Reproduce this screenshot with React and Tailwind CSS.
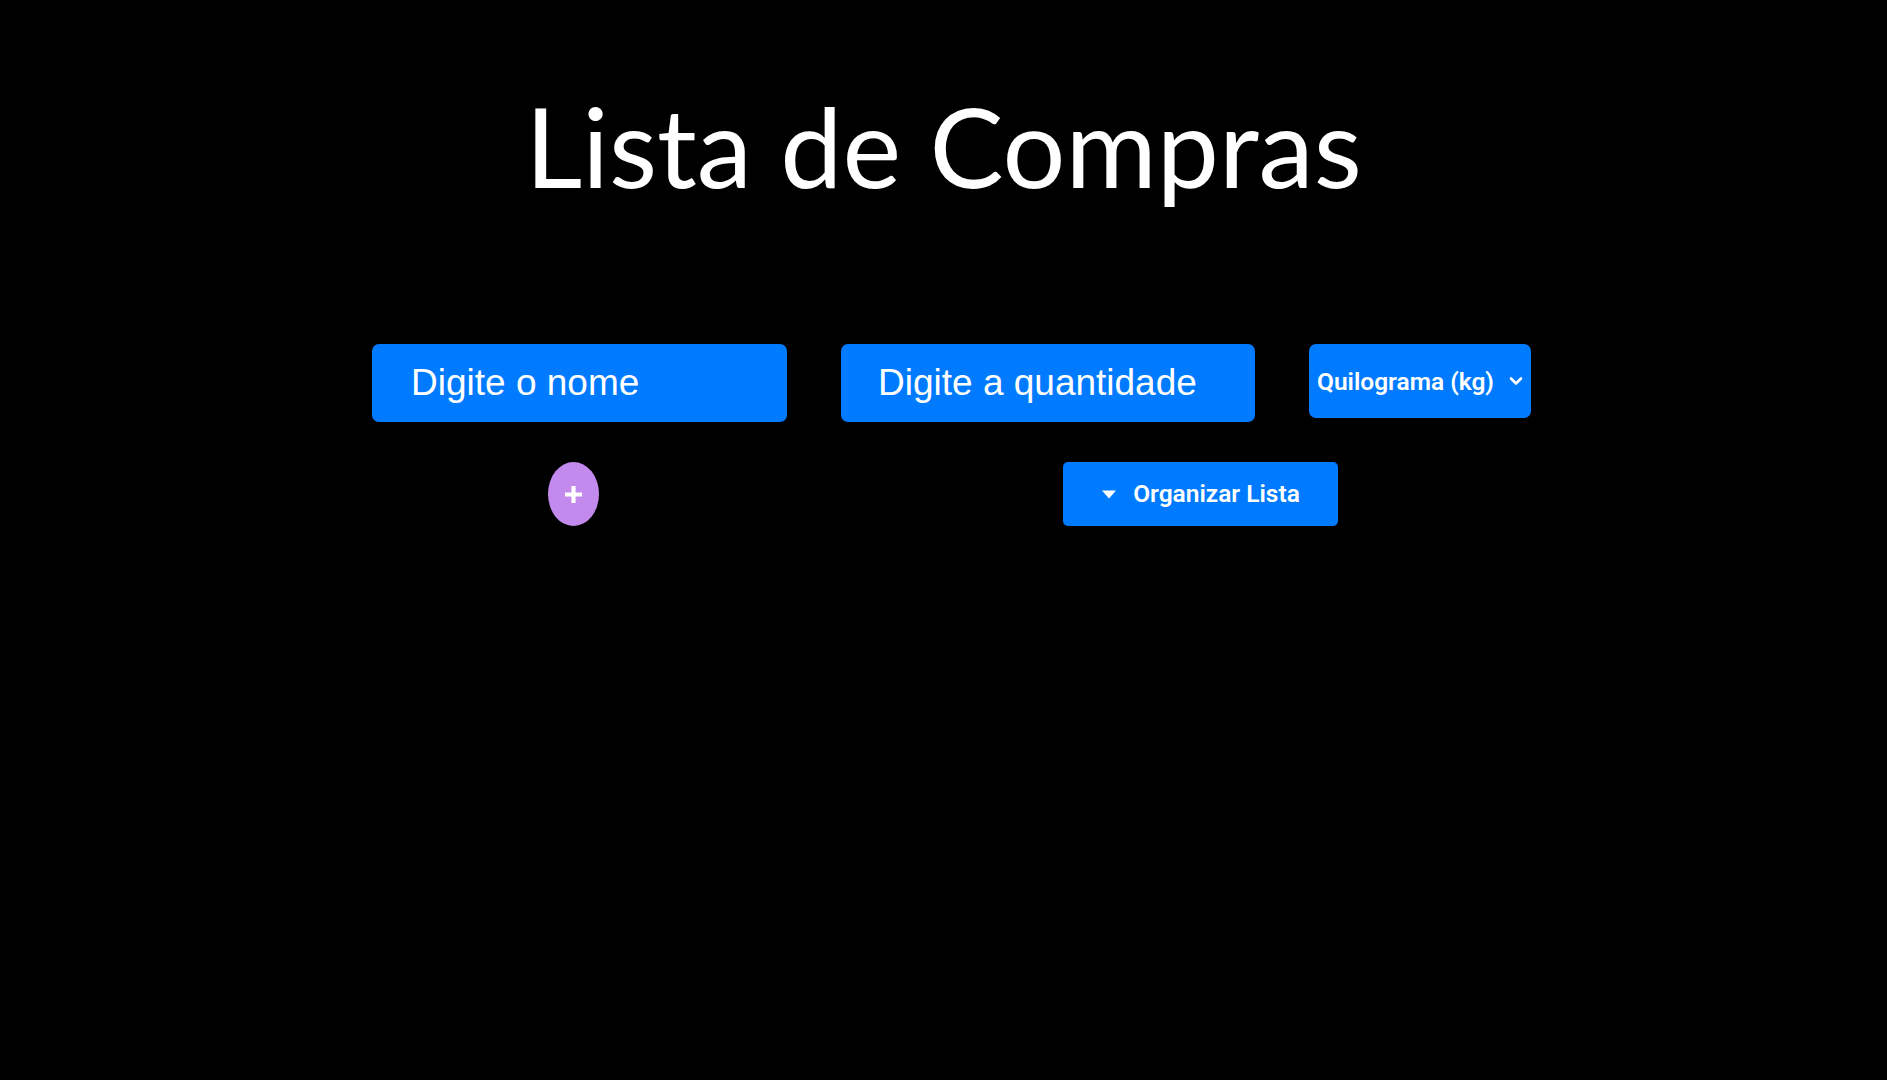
import { useState } from 'react';

function ChevronIcon() {
  return (
    <svg width="14" height="10" viewBox="0 0 14 10" fill="none">
      <path d="M2 2.5 L7 7.5 L12 2.5" stroke="white" strokeWidth="2.6" strokeLinecap="round" strokeLinejoin="round" />
    </svg>
  );
}

function CaretIcon() {
  return (
    <svg width="16" height="9" viewBox="0 0 16 9">
      <path d="M1 0.5 H15 L8 8.5 Z" fill="white" />
    </svg>
  );
}

function PlusIcon() {
  return (
    <svg width="21" height="21" viewBox="0 0 21 21">
      <path d="M10.5 2 V19 M2 10.5 H19" stroke="white" strokeWidth="4.2" />
    </svg>
  );
}

export default function App() {
  const [nome, setNome] = useState('');
  const [quantidade, setQuantidade] = useState('');
  const [unidade, setUnidade] = useState('kg');

  return (
    <div className="min-h-screen w-full bg-black font-['Liberation_Sans',Arial,sans-serif] text-white">
      {/* Header */}
      <h1 className="pt-[79px] text-center font-['Lato',sans-serif] text-[111px] leading-[1.2] font-normal">
        Lista de Compras
      </h1>

      <div className="mt-[132px] flex justify-center pl-4">
        <div className="flex flex-col">
          {/* Form row */}
          <div className="flex items-start">
            <input
              value={nome}
              onChange={(e) => setNome(e.target.value)}
              placeholder="Digite o nome"
              className="h-[78px] w-[415px] rounded-[7px] bg-[#007bff] pl-[39px] text-[37px] text-white placeholder:text-white outline-none"
            />
            <input
              value={quantidade}
              onChange={(e) => setQuantidade(e.target.value)}
              placeholder="Digite a quantidade"
              className="ml-[54px] h-[78px] w-[414px] rounded-[7px] bg-[#007bff] pl-[37px] text-[37px] text-white placeholder:text-white outline-none"
            />
            <div className="relative ml-[54px]">
              <select
                value={unidade}
                onChange={(e) => setUnidade(e.target.value)}
                className="h-[74px] w-[222px] appearance-none rounded-[7px] bg-[#007bff] pl-[8px] pt-[2px] font-['Roboto',sans-serif] text-[24.5px] font-semibold text-white outline-none"
              >
                <option value="kg">Quilograma (kg)</option>
                <option value="g">Grama (g)</option>
                <option value="un">Unidade (un)</option>
                <option value="l">Litro (l)</option>
              </select>
              <span className="pointer-events-none absolute right-[8px] top-[32px]">
                <ChevronIcon />
              </span>
            </div>
          </div>

          {/* Actions row */}
          <div className="mt-[40px] flex items-start">
            <button className="ml-[176px] flex h-[64px] w-[51px] items-center justify-center rounded-[50%] bg-[#c28aec]">
              <PlusIcon />
            </button>
            <button className="ml-[464px] flex h-[64px] w-[275px] items-center justify-center gap-[16px] rounded-[5px] bg-[#007bff] font-['Roboto',sans-serif] text-[24.5px] font-semibold text-white">
              <CaretIcon />
              Organizar Lista
            </button>
          </div>
        </div>
      </div>
    </div>
  );
}
